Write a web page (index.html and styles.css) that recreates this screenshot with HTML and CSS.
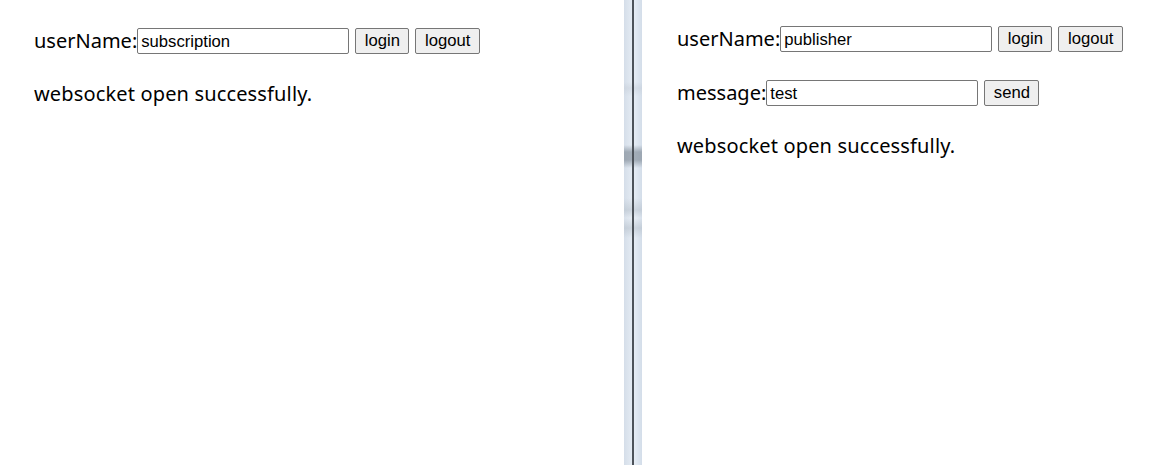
FILE: index.html
```html
<!DOCTYPE html>
<html>
<head>
<meta charset="utf-8">
<link rel="stylesheet" href="styles.css">
</head>
<body>
<div class="screen">
  <section class="pane pane-left">
    <div class="row">
      <span class="label">userName:</span>
      <input class="field" type="text" value="subscription">
      <button class="btn">login</button>
      <button class="btn">logout</button>
    </div>
    <div class="status">websocket open successfully.</div>
  </section>
  <div class="divider">
    <div class="strip strip-a"></div>
    <div class="line"></div>
    <div class="strip strip-b"></div>
  </div>
  <section class="pane pane-right">
    <div class="row">
      <span class="label">userName:</span>
      <input class="field" type="text" value="publisher">
      <button class="btn">login</button>
      <button class="btn">logout</button>
    </div>
    <div class="row row-msg">
      <span class="label">message:</span>
      <input class="field" type="text" value="test">
      <button class="btn">send</button>
    </div>
    <div class="status">websocket open successfully.</div>
  </section>
</div>
</body>
</html>
```

FILE: styles.css
```css
html, body {
  margin: 0;
  padding: 0;
  background: #ffffff;
}
.screen {
  display: flex;
  width: 1168px;
  height: 465px;
  overflow: hidden;
}
.pane {
  display: flex;
  flex-direction: column;
  font-family: "Noto Sans", "Open Sans", sans-serif;
  font-size: 20px;
  color: #000;
}
.pane-left {
  width: 590px;
  padding: 28px 0 0 34px;
}
.pane-right {
  flex: 1;
  padding: 26px 0 0 35px;
}
.row {
  display: flex;
  align-items: center;
  height: 26px;
}
.row-msg {
  margin-top: 28px;
}
.label {
  line-height: 26px;
}
.field {
  box-sizing: border-box;
  width: 212px;
  height: 26px;
  margin: 0;
  padding: 1px 3px 0;
  border: 1px solid #767676;
  border-radius: 2px;
  font-family: "Liberation Sans", Arial, sans-serif;
  font-size: 16.67px;
  color: #000;
  background: #fff;
}
.btn {
  box-sizing: border-box;
  height: 26px;
  margin: 0 0 0 6px;
  padding: 0 8.5px;
  border: 1px solid #767676;
  border-radius: 2px;
  background: #efefef;
  font-family: "Liberation Sans", Arial, sans-serif;
  font-size: 16.67px;
  color: #000;
}
.status {
  margin-top: 27px;
  line-height: 26px;
  letter-spacing: 0.15px;
}
.divider {
  display: flex;
  width: 18px;
  height: 465px;
  flex: none;
}
.strip {
  width: 8px;
  background:
    linear-gradient(to bottom,
      rgba(255,255,255,0) 0px, rgba(255,255,255,0) 82px,
      rgba(190,198,208,0.35) 88px, rgba(255,255,255,0) 96px,
      rgba(255,255,255,0) 145px,
      rgba(110,122,134,0.55) 152px, rgba(110,122,134,0.55) 160px,
      rgba(255,255,255,0) 168px,
      rgba(255,255,255,0) 198px,
      rgba(170,180,190,0.4) 210px,
      rgba(255,255,255,0.1) 218px,
      rgba(170,180,190,0.4) 228px,
      rgba(255,255,255,0) 238px,
      rgba(255,255,255,0) 465px),
    linear-gradient(to right, #d5dee9, #e4ebf3);
}
.strip-b {
  background:
    linear-gradient(to bottom,
      rgba(255,255,255,0) 0px, rgba(255,255,255,0) 82px,
      rgba(190,198,208,0.35) 88px, rgba(255,255,255,0) 96px,
      rgba(255,255,255,0) 145px,
      rgba(110,122,134,0.55) 152px, rgba(110,122,134,0.55) 160px,
      rgba(255,255,255,0) 168px,
      rgba(255,255,255,0) 198px,
      rgba(170,180,190,0.4) 210px,
      rgba(255,255,255,0.1) 218px,
      rgba(170,180,190,0.4) 228px,
      rgba(255,255,255,0) 238px,
      rgba(255,255,255,0) 465px),
    linear-gradient(to right, #e6edf5, #d3dde9);
}
.line {
  width: 2px;
  background: #4d535a;
}
```
